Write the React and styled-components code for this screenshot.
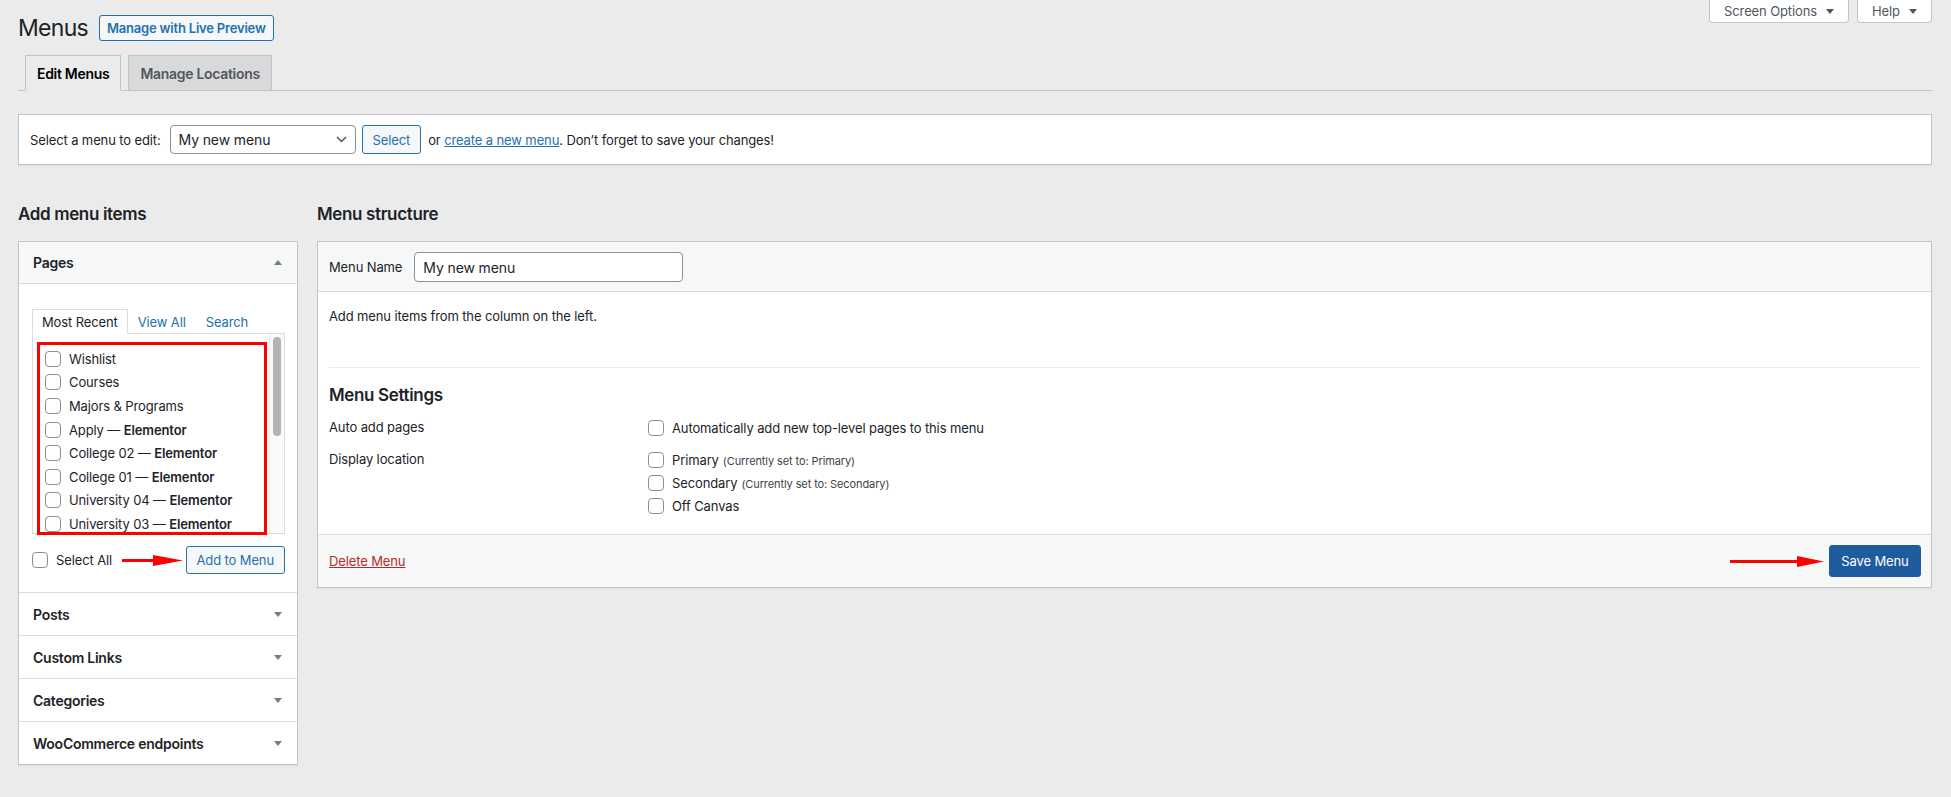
import React from 'react';
import styled, { createGlobalStyle } from 'styled-components';

const BLUE = '#2271b1';

const GlobalStyle = createGlobalStyle`
  html, body { margin: 0; padding: 0; }
  body {
    background: #ebebeb;
    font-family: Inter, "Noto Sans", sans-serif;
    font-size: 13px;
    letter-spacing: -0.12px;
    color: #1d2327;
    width: 1951px;
    height: 797px;
    overflow: hidden;
  }
  * { box-sizing: border-box; }
  button, input { letter-spacing: inherit; }
`;

const Page = styled.div`
  padding: 0 19px 0 18px;
`;

const TopRow = styled.div`
  display: flex;
  justify-content: space-between;
  align-items: flex-start;
`;

const TitleGroup = styled.div`
  display: flex;
  align-items: center;
  gap: 11px;
  margin-top: 15px;
  height: 26px;
`;

const Title = styled.h1`
  margin: 0;
  font-size: 23px;
  font-weight: 400;
  line-height: 26px;
  letter-spacing: -0.7px;
  color: #1d2327;
`;

const OutlineButton = styled.button`
  font-family: inherit;
  height: ${p => p.$h || 26}px;
  padding: 0 ${p => p.$px || 7}px;
  border: 1px solid ${BLUE};
  border-radius: 3px;
  background: #f6f7f7;
  color: ${BLUE};
  font-size: 13px;
  font-weight: ${p => p.$bold ? 600 : 400};
  letter-spacing: ${p => p.$bold ? '-0.2px' : '-0.12px'};
  display: inline-flex;
  align-items: center;
  white-space: nowrap;
`;

const MetaLinks = styled.div`
  display: flex;
  gap: 8px;
`;

const MetaTab = styled.div`
  width: ${p => p.$w}px;
  height: 23px;
  display: flex;
  align-items: center;
  justify-content: center;
  gap: 9px;
  background: #fff;
  border: 1px solid #c3c4c7;
  border-top: none;
  border-radius: 0 0 4px 4px;
  color: #50575e;
  font-size: 13px;
`;

const Caret = styled.span`
  width: 0;
  height: 0;
  border-left: 4px solid transparent;
  border-right: 4px solid transparent;
  ${p => p.$up
    ? `border-bottom: 5px solid ${p.$color || '#50575e'};`
    : `border-top: 5px solid ${p.$color || '#50575e'};`}
`;

const TabBar = styled.div`
  margin-top: 14px;
  display: flex;
  gap: 7px;
  padding-left: 7px;
  border-bottom: 1px solid #c3c4c7;
`;

const NavTab = styled.div`
  height: 36px;
  margin-bottom: -1px;
  padding: 0 11px;
  display: flex;
  align-items: center;
  border: 1px solid #c3c4c7;
  border-bottom-color: ${p => p.$active ? '#ebebeb' : '#c3c4c7'};
  background: ${p => p.$active ? '#ebebeb' : '#d9d9db'};
  color: ${p => p.$active ? '#000' : '#50575e'};
  font-size: 14px;
  font-weight: 600;
  letter-spacing: -0.3px;
`;

const ManageBar = styled.div`
  margin-top: 23px;
  height: 51px;
  display: flex;
  align-items: center;
  padding: 0 10px 0 11px;
  background: #fff;
  border: 1px solid #c3c4c7;
  box-shadow: 0 1px 1px rgba(0, 0, 0, 0.04);
  font-size: 13px;
`;

const BarLabel = styled.span`
  margin-right: 9px;
`;

const SelectBox = styled.div`
  width: 186px;
  height: 29px;
  border: 1px solid #8c8f94;
  border-radius: 4px;
  display: flex;
  align-items: center;
  justify-content: space-between;
  padding: 0 8px 0 8px;
  font-size: 14px;
  background: #fff;
`;

const BarText = styled.span`
  margin-left: 7px;
  a { color: ${BLUE}; text-decoration: underline; }
`;

const Columns = styled.div`
  display: flex;
  gap: 19px;
  align-items: flex-start;
`;

const LeftCol = styled.div`
  width: 280px;
  flex: none;
`;

const RightCol = styled.div`
  flex: 1;
  min-width: 0;
`;

const ColHeading = styled.h2`
  margin: 38px 0 16px;
  font-size: 17px;
  font-weight: 600;
  line-height: 22px;
  letter-spacing: -0.35px;
  color: #1d2327;
`;

const Accordion = styled.div`
  background: #fff;
  border: 1px solid #c3c4c7;
  box-shadow: 0 1px 1px rgba(0, 0, 0, 0.04);
`;

const Section = styled.div`
  & + & { border-top: 1px solid #dcdcde; }
`;

const SectionHeader = styled.div`
  height: 42px;
  display: flex;
  align-items: center;
  justify-content: space-between;
  padding: 0 15px 0 14px;
  font-size: 14px;
  font-weight: 600;
  letter-spacing: -0.25px;
  background: ${p => p.$open ? '#f6f7f7' : '#fff'};
  border-bottom: ${p => p.$open ? '1px solid #dcdcde' : 'none'};
`;

const SectionContent = styled.div`
  padding: 25px 12px 18px 13px;
`;

const PostTabs = styled.div`
  display: flex;
  height: 24px;
  position: relative;
  z-index: 1;
`;

const PostTab = styled.div`
  height: 25px;
  margin-bottom: -1px;
  padding: 0 9px;
  display: flex;
  align-items: center;
  font-size: 13px;
  border: 1px solid ${p => p.$active ? '#dcdcde' : 'transparent'};
  border-bottom-color: ${p => p.$active ? '#fff' : 'transparent'};
  background: ${p => p.$active ? '#fff' : 'transparent'};
  color: ${p => p.$active ? '#1d2327' : BLUE};
`;

const ListBox = styled.div`
  position: relative;
  height: 201px;
  border: 1px solid #dcdcde;
  background: #fff;
  display: flex;
`;

const ItemsViewport = styled.div`
  flex: 1;
  overflow: hidden;
  padding: 13px 0 0 12px;
`;

const ItemRow = styled.label`
  height: 23.6px;
  display: flex;
  align-items: center;
  gap: 8px;
  font-size: 13px;
  white-space: nowrap;
  b { font-weight: 600; }
`;

const ScrollTrack = styled.div`
  width: 15px;
  background: #fafafa;
  border-left: 1px solid #ececec;
  padding: 3px 3px 0 3px;
`;

const ScrollThumb = styled.div`
  height: 99px;
  border-radius: 4px;
  background: #b4b4b4;
`;

const RedFrame = styled.div`
  position: absolute;
  left: 4px;
  top: 8px;
  width: 230px;
  height: 193px;
  border: 3px solid #f00;
  pointer-events: none;
`;

const Checkbox = styled.input.attrs({ type: 'checkbox' })`
  appearance: none;
  -webkit-appearance: none;
  margin: 0;
  width: 16px;
  height: 16px;
  flex: none;
  border: 1px solid #8c8f94;
  border-radius: 4px;
  background: #fff;
`;

const SelectAllRow = styled.div`
  margin-top: 12px;
  height: 28px;
  display: flex;
  align-items: center;
  justify-content: space-between;
`;

const CheckLabel = styled.label`
  display: flex;
  align-items: center;
  gap: 8px;
  font-size: 13px;
`;

const ArrowGroup = styled.div`
  display: flex;
  align-items: center;
  gap: ${p => p.$gap || 3}px;
`;

const MenuPanel = styled.div`
  background: #fff;
  border: 1px solid #c3c4c7;
  box-shadow: 0 1px 1px rgba(0, 0, 0, 0.04);
`;

const PanelHeader = styled.div`
  background: #f6f7f7;
  border-bottom: 1px solid #dcdcde;
  padding: 10px 11px 9px;
  display: flex;
  align-items: center;
  gap: 12px;
  font-size: 13px;
`;

const NameInput = styled.input`
  width: 269px;
  height: 30px;
  border: 1px solid #8c8f94;
  border-radius: 4px;
  padding: 0 8px;
  font-family: inherit;
  font-size: 14px;
  color: #1d2327;
  background: #fff;
`;

const PanelBody = styled.div`
  padding: 0 11px 17px;
`;

const EmptyNote = styled.p`
  margin: 15px 0 0;
  line-height: 18px;
  font-size: 13px;
`;

const SettingsBlock = styled.div`
  margin-top: 42px;
  border-top: 1px solid #ececec;
  padding-top: 16px;
`;

const SettingsTitle = styled.h3`
  margin: 0 0 10px;
  font-size: 17px;
  font-weight: 600;
  line-height: 22px;
  letter-spacing: -0.35px;
`;

const SettingsGrid = styled.div`
  display: grid;
  grid-template-columns: 319px 1fr;
  row-gap: 9px;
`;

const SettingLabel = styled.div`
  line-height: 23px;
  font-size: 13px;
`;

const Options = styled.div`
  display: flex;
  flex-direction: column;
`;

const OptionLine = styled.label`
  height: 23px;
  display: flex;
  align-items: center;
  gap: 8px;
  font-size: 13px;
  small { font-size: 11px; color: #3c434a; margin-left: 4px; letter-spacing: -0.1px; }
`;

const PanelFooter = styled.div`
  background: #f6f7f7;
  border-top: 1px solid #dcdcde;
  padding: 10px 10px 10px 11px;
  display: flex;
  justify-content: space-between;
  align-items: center;
`;

const DeleteLink = styled.a`
  color: #b32d2e;
  text-decoration: underline;
  font-size: 13px;
`;

const PrimaryButton = styled.button`
  font-family: inherit;
  width: 92px;
  height: 32px;
  padding: 0;
  border: 1px solid #1f5c9f;
  border-radius: 3px;
  background: #1f5c9f;
  color: #fff;
  font-size: 13px;
`;

function RedArrow({ width, head, height }) {
  const mid = height / 2;
  return (
    <svg width={width} height={height} viewBox={`0 0 ${width} ${height}`}>
      <line x1="0" y1={mid} x2={width - head + 2} y2={mid} stroke="#f00" strokeWidth="3" />
      <polygon points={`${width - head},0 ${width},${mid} ${width - head},${height}`} fill="#f00" />
    </svg>
  );
}

function Chevron() {
  return (
    <svg width="11" height="7" viewBox="0 0 11 7">
      <path d="M1 1l4.5 4.5L10 1" fill="none" stroke="#50575e" strokeWidth="1.5" />
    </svg>
  );
}

const pages = [
  ['Wishlist'],
  ['Courses'],
  ['Majors & Programs'],
  ['Apply', 'Elementor'],
  ['College 02', 'Elementor'],
  ['College 01', 'Elementor'],
  ['University 04', 'Elementor'],
  ['University 03', 'Elementor'],
];

const closedSections = ['Posts', 'Custom Links', 'Categories', 'WooCommerce endpoints'];

export default function App() {
  return (
    <>
      <GlobalStyle />
      <Page>
        <TopRow>
          <TitleGroup>
            <Title>Menus</Title>
            <OutlineButton $bold>Manage with Live Preview</OutlineButton>
          </TitleGroup>
          <MetaLinks>
            <MetaTab $w={140}>Screen Options <Caret /></MetaTab>
            <MetaTab $w={75}>Help <Caret /></MetaTab>
          </MetaLinks>
        </TopRow>

        <TabBar>
          <NavTab $active>Edit Menus</NavTab>
          <NavTab>Manage Locations</NavTab>
        </TabBar>

        <ManageBar>
          <BarLabel>Select a menu to edit:</BarLabel>
          <SelectBox>
            <span>My new menu</span>
            <Chevron />
          </SelectBox>
          <OutlineButton $h={29} $px={10} style={{ marginLeft: 6 }}>Select</OutlineButton>
          <BarText>
            or <a>create a new menu</a>. Don’t forget to save your changes!
          </BarText>
        </ManageBar>

        <Columns>
          <LeftCol>
            <ColHeading>Add menu items</ColHeading>
            <Accordion>
              <Section>
                <SectionHeader $open>
                  Pages
                  <Caret $up $color="#787c82" />
                </SectionHeader>
                <SectionContent>
                  <PostTabs>
                    <PostTab $active>Most Recent</PostTab>
                    <PostTab>View All</PostTab>
                    <PostTab>Search</PostTab>
                  </PostTabs>
                  <ListBox>
                    <ItemsViewport>
                      {pages.map(([name, state]) => (
                        <ItemRow key={name}>
                          <Checkbox />
                          <span>
                            {name}
                            {state && <> — <b>{state}</b></>}
                          </span>
                        </ItemRow>
                      ))}
                    </ItemsViewport>
                    <ScrollTrack>
                      <ScrollThumb />
                    </ScrollTrack>
                    <RedFrame />
                  </ListBox>
                  <SelectAllRow>
                    <CheckLabel>
                      <Checkbox />
                      Select All
                    </CheckLabel>
                    <ArrowGroup>
                      <RedArrow width={61} head={30} height={11} />
                      <OutlineButton $h={28} $px={10}>Add to Menu</OutlineButton>
                    </ArrowGroup>
                  </SelectAllRow>
                </SectionContent>
              </Section>
              {closedSections.map(s => (
                <Section key={s}>
                  <SectionHeader>
                    {s}
                    <Caret $color="#787c82" />
                  </SectionHeader>
                </Section>
              ))}
            </Accordion>
          </LeftCol>

          <RightCol>
            <ColHeading>Menu structure</ColHeading>
            <MenuPanel>
              <PanelHeader>
                <span>Menu Name</span>
                <NameInput defaultValue="My new menu" readOnly />
              </PanelHeader>
              <PanelBody>
                <EmptyNote>Add menu items from the column on the left.</EmptyNote>
                <SettingsBlock>
                  <SettingsTitle>Menu Settings</SettingsTitle>
                  <SettingsGrid>
                    <SettingLabel>Auto add pages</SettingLabel>
                    <Options>
                      <OptionLine><Checkbox />Automatically add new top-level pages to this menu</OptionLine>
                    </Options>
                    <SettingLabel>Display location</SettingLabel>
                    <Options>
                      <OptionLine><Checkbox /><span>Primary<small>(Currently set to: Primary)</small></span></OptionLine>
                      <OptionLine><Checkbox /><span>Secondary<small>(Currently set to: Secondary)</small></span></OptionLine>
                      <OptionLine><Checkbox />Off Canvas</OptionLine>
                    </Options>
                  </SettingsGrid>
                </SettingsBlock>
              </PanelBody>
              <PanelFooter>
                <DeleteLink>Delete Menu</DeleteLink>
                <ArrowGroup $gap={5}>
                  <RedArrow width={94} head={27} height={11} />
                  <PrimaryButton>Save Menu</PrimaryButton>
                </ArrowGroup>
              </PanelFooter>
            </MenuPanel>
          </RightCol>
        </Columns>
      </Page>
    </>
  );
}
